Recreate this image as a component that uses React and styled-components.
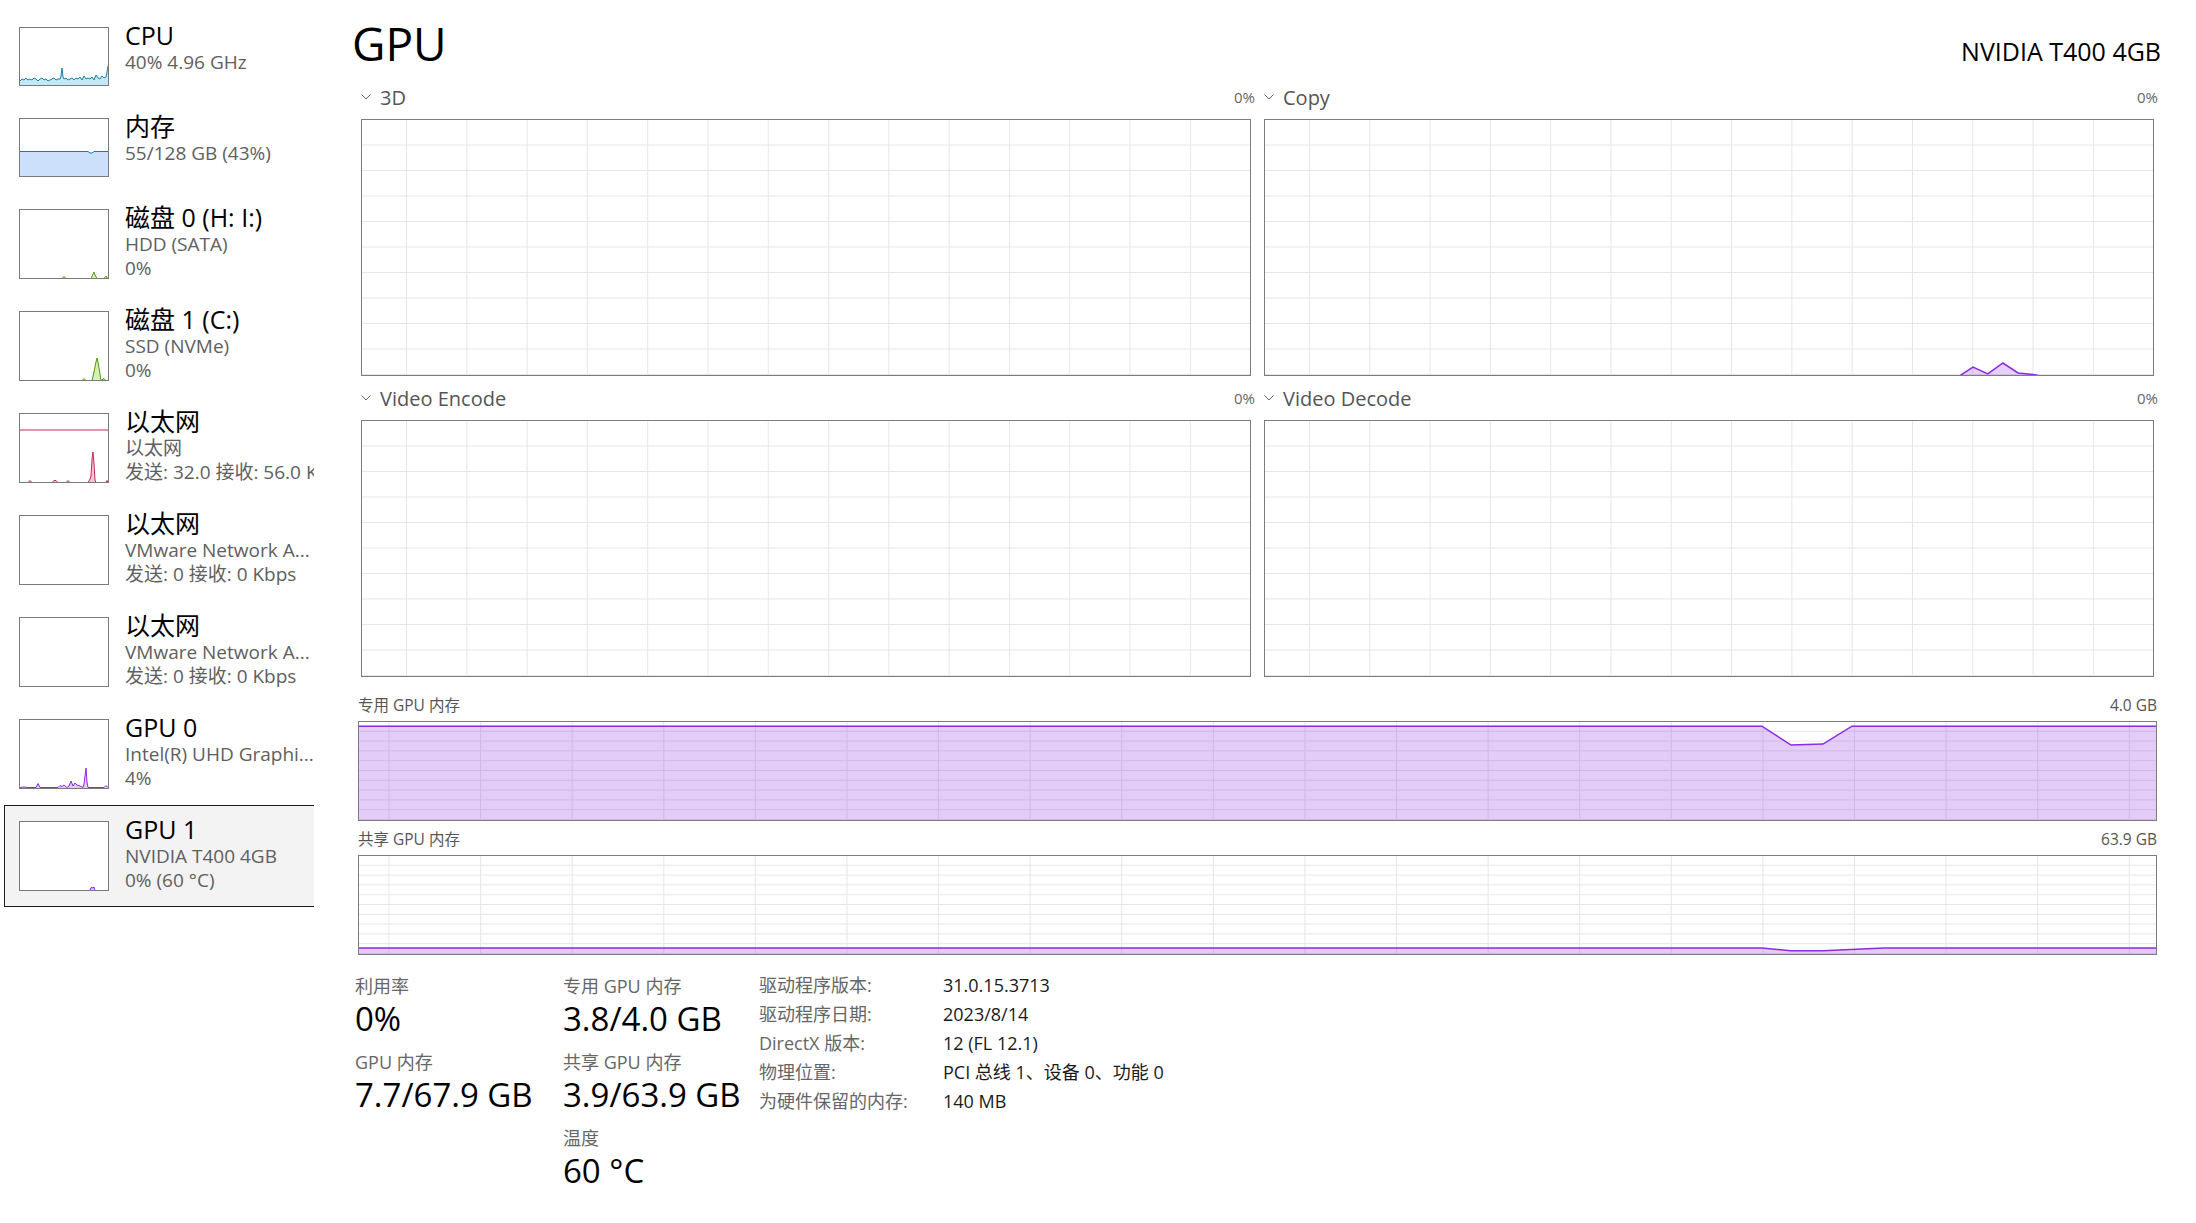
import React from "react";
import styled, { createGlobalStyle } from "styled-components";

const GlobalStyle = createGlobalStyle`
  html, body {
    margin: 0;
    padding: 0;
    background: #fff;
  }
  body {
    font-family: "Open Sans", "Noto Sans CJK SC", sans-serif;
    color: #000;
  }
  * {
    box-sizing: border-box;
  }
`;

const Page = styled.div`
  display: flex;
  width: 2196px;
  height: 1223px;
  overflow: hidden;
  background: #fff;
`;

/* ---------- sidebar ---------- */

const Sidebar = styled.div`
  width: 314px;
  flex: none;
  padding-top: 11px;
  overflow: hidden;
  display: flex;
  flex-direction: column;
`;

const Row = styled.div`
  display: flex;
  gap: 16px;
  width: 312px;
  height: ${(p) => p.$h + 32}px;
  margin-left: 4px;
  padding: 15px 0 15px 14px;
  border: 1px solid ${(p) => (p.$selected ? "#1c1c1c" : "transparent")};
  background: ${(p) => (p.$selected ? "#f3f3f3" : "transparent")};
  flex: none;
`;

const Thumb = styled.div`
  width: 90px;
  height: ${(p) => p.$h}px;
  flex: none;
  border: 1px solid #7a7a7a;
  background: #fff;

  svg {
    display: block;
    width: 100%;
    height: 100%;
    overflow: hidden;
  }
`;

const RowText = styled.div`
  margin-top: -7.5px;
  white-space: nowrap;
`;

const RowTitle = styled.div`
  font-size: 25px;
  line-height: 30px;
  color: #000;
`;

const RowSub = styled.div`
  font-size: 19px;
  line-height: 24px;
  color: #606060;
`;

/* ---------- main ---------- */

const Main = styled.div`
  flex: 1;
  min-width: 0;
  padding: 0 38px 0 40px;
  display: flex;
  flex-direction: column;
`;

const Header = styled.div`
  display: flex;
  justify-content: space-between;
  align-items: baseline;
  padding: 15px 0 4px;
`;

const Title = styled.h1`
  margin: 0 0 0 -2px;
  font-size: 46px;
  font-weight: 400;
  line-height: 56px;
`;

const Model = styled.div`
  margin-right: -3px;
  font-size: 25px;
  line-height: 30px;
`;

const EngineGrid = styled.div`
  display: grid;
  grid-template-columns: 1fr 1fr;
  column-gap: 5px;
  margin-left: 3px;
`;

const EngineHead = styled.div`
  height: 44px;
  display: flex;
  align-items: center;
  padding-left: 4px;
  color: #555;
`;

const EngineName = styled.span`
  font-size: 20px;
  margin-left: 9px;
`;

const EngineMax = styled.span`
  margin-left: auto;
  font-size: 15px;
  color: #666;
`;

const Chart = styled.div`
  position: relative;
  height: ${(p) => p.$h}px;
  margin: ${(p) => p.$m || "0 4px"};
  border: 1px solid #7c7c7c;
  background-color: #fff;
  background-image: linear-gradient(to right, #e6e6e6 1px, transparent 1px),
    linear-gradient(to bottom, #e6e6e6 1px, transparent 1px);
  background-size: ${(p) => p.$cw}px 100%, 100% 10%;
  background-position: ${(p) => p.$ox}px 0, 0 -1px;

  svg {
    position: absolute;
    inset: 0;
    width: 100%;
    height: 100%;
    display: block;
    overflow: hidden;
  }
`;

const MemBlock = styled.div`
  margin: 0 1px 0 4px;
  padding-top: ${(p) => p.$top}px;
`;

const MemHead = styled.div`
  display: flex;
  justify-content: space-between;
  font-size: 15.5px;
  line-height: 22px;
  color: #555;
  padding-bottom: 5px;
`;

const Stats = styled.div`
  display: flex;
  margin: 20px 0 0 1px;
`;

const StatCol = styled.div`
  width: ${(p) => p.$w}px;
  flex: none;
  display: flex;
  flex-direction: column;
  gap: 12px;
`;

const StatLabel = styled.div`
  font-size: 18px;
  line-height: 22px;
  color: #666;
`;

const StatValue = styled.div`
  padding-top: 2px;
  font-size: 33px;
  line-height: 40px;
  color: #000;
`;

const Details = styled.div`
  display: grid;
  grid-template-columns: 184px auto;
  margin-top: -4px;
  font-size: 18px;
  line-height: 29px;
  align-content: start;
`;

const DetailKey = styled.div`
  color: #666;
`;

const DetailVal = styled.div`
  color: #1a1a1a;
`;

/* ---------- drawings ---------- */

const Chevron = () => (
  <svg width="10" height="6" viewBox="0 0 10 6">
    <path d="M0.5 0.5 L5 5 L9.5 0.5" fill="none" stroke="#666" strokeWidth="1" />
  </svg>
);

const COLORS = {
  cpu: ["#1b7fa6", "#c3e8f6"],
  mem: ["#1e6ee8", "#cde0fb"],
  disk: ["#4d9a10", "#d6efbc"],
  net: ["#c4265e", "#f3c8d6"],
  gpu: ["#8a2be2", "#dfcaf9"],
};

// Z marks the zero level, a touch below the visible area so flat stretches hide
function Spark({ h, pts, kind, marker }) {
  const [stroke, fill] = COLORS[kind];
  const inner = h - 2;
  const z = inner + 0.6;
  const line = pts.replace(/Z/g, z);
  return (
    <svg viewBox={`0 0 88 ${inner}`} preserveAspectRatio="none">
      {marker != null && (
        <line x1="0" y1={marker} x2="88" y2={marker} stroke={stroke} strokeWidth="1" />
      )}
      <polygon points={`0,${z} ${line} 88,${z}`} fill={fill} />
      <polyline points={line} fill="none" stroke={stroke} strokeWidth="1" />
    </svg>
  );
}

function ChartFill({ pts, fill = "rgba(139, 43, 226, 0.24)" }) {
  return (
    <svg viewBox="0 0 100 100" preserveAspectRatio="none">
      <polygon points={`0,101 ${pts} 100,101`} fill={fill} />
      <polyline
        points={pts}
        fill="none"
        stroke="#8a2be2"
        strokeWidth="1.5"
        vectorEffect="non-scaling-stroke"
      />
    </svg>
  );
}

/* ---------- data ---------- */

const devices = [
  {
    title: "CPU",
    lines: ["40% 4.96 GHz"],
    h: 59,
    kind: "cpu",
    pts: "0,53 2,51 4,52 6,50 8,52 10,51 12,52 14,50 16,51 18,53 20,51 22,50 24,52 26,51 28,53 30,52 32,51 34,50 36,52 38,51 40,51 41,48 42,40 43,49 44,51 46,50 48,52 50,51 52,50 54,52 56,50 58,51 60,49 62,52 64,48 66,51 68,50 70,51 72,49 74,52 76,47 78,50 80,51 82,48 84,50 86,49 87,44 88,38",
  },
  {
    title: "内存",
    lines: ["55/128 GB (43%)"],
    h: 59,
    kind: "mem",
    pts: "0,32.5 68,32.5 70,34 72,34 74,32.5 88,32.5",
  },
  {
    title: "磁盘 0 (H: I:)",
    lines: ["HDD (SATA)", "0%"],
    h: 70,
    kind: "disk",
    pts: "0,Z 42,Z 44,66.5 46,Z 71,Z 73,64 74,62 75,65 77,Z 84,Z 86,66 88,Z",
  },
  {
    title: "磁盘 1 (C:)",
    lines: ["SSD (NVMe)", "0%"],
    h: 70,
    kind: "disk",
    pts: "0,Z 62,Z 64,66.5 66,Z 72,Z 74,60 76,50 77,46 78,50 80,62 81,Z 84,66.5 86,Z 88,Z",
  },
  {
    title: "以太网",
    lines: ["以太网", "发送: 32.0 接收: 56.0 Kbps"],
    h: 70,
    kind: "net",
    marker: 16,
    pts: "0,Z 8,Z 10,66.5 12,Z 32,Z 34,66.5 36,66.5 38,Z 46,Z 48,66.5 50,Z 68,Z 70,65 71,62 72,45 73,38 74,50 75,66 76,Z 86,Z 87,66.5 88,Z",
  },
  {
    title: "以太网",
    lines: ["VMware Network A...", "发送: 0 接收: 0 Kbps"],
    h: 70,
  },
  {
    title: "以太网",
    lines: ["VMware Network A...", "发送: 0 接收: 0 Kbps"],
    h: 70,
  },
  {
    title: "GPU 0",
    lines: ["Intel(R) UHD Graphi...", "4%"],
    h: 70,
    kind: "gpu",
    pts: "0,67.5 4,67 8,67.5 16,67.5 18,63.5 20,67.5 38,67.5 40,65.5 42,66.5 44,65 47,67.5 49,66 51,61 53,66 55,63 57,65 60,66 63,67.5 64,64 66,48 67,62 68,67.5 84,67.5 86,65.5 88,67.5",
  },
  {
    title: "GPU 1",
    lines: ["NVIDIA T400 4GB", "0% (60 °C)"],
    h: 70,
    kind: "gpu",
    selected: true,
    pts: "0,Z 70,Z 71,65.5 73,66 74,65 75,Z 88,Z",
  },
];

const engines = [
  { name: "3D", pts: null },
  {
    name: "Copy",
    pts: "78.15,100.5 79.73,96.9 81.4,99.6 83.1,95.3 84.8,99.2 86.5,99.8 87.5,100.5",
  },
  { name: "Video Encode", pts: null },
  { name: "Video Decode", pts: null },
];

const details = [
  ["驱动程序版本:", "31.0.15.3713"],
  ["驱动程序日期:", "2023/8/14"],
  ["DirectX 版本:", "12 (FL 12.1)"],
  ["物理位置:", "PCI 总线 1、设备 0、功能 0"],
  ["为硬件保留的内存:", "140 MB"],
];

export default function App() {
  return (
    <>
      <GlobalStyle />
      <Page>
        <Sidebar>
          {devices.map((d, i) => (
            <Row key={i} $h={d.h} $selected={d.selected}>
              <Thumb $h={d.h}>
                {d.kind && <Spark h={d.h} pts={d.pts} kind={d.kind} marker={d.marker} />}
              </Thumb>
              <RowText>
                <RowTitle>{d.title}</RowTitle>
                {d.lines.map((l, j) => (
                  <RowSub key={j}>{l}</RowSub>
                ))}
              </RowText>
            </Row>
          ))}
        </Sidebar>

        <Main>
          <Header>
            <Title>GPU</Title>
            <Model>NVIDIA T400 4GB</Model>
          </Header>

          <EngineGrid>
            {engines.map((e) => (
              <div key={e.name}>
                <EngineHead>
                  <Chevron />
                  <EngineName>{e.name}</EngineName>
                  <EngineMax>0%</EngineMax>
                </EngineHead>
                <Chart $h={257} $cw={60.3} $ox={44}>
                  {e.pts && (
                    <ChartFill pts={e.pts} fill="rgba(139, 43, 226, 0.22)" />
                  )}
                </Chart>
              </div>
            ))}
          </EngineGrid>

          <MemBlock $top={17}>
            <MemHead>
              <span>专用 GPU 内存</span>
              <span>4.0 GB</span>
            </MemHead>
            <Chart $h={100} $cw={91.6} $ox={29.5} $m="0">
              <ChartFill pts="0,4.3 78.07,4.3 79.69,23.5 81.47,22.5 83.08,4.3 100,4.3" />
            </Chart>
          </MemBlock>

          <MemBlock $top={7}>
            <MemHead>
              <span>共享 GPU 内存</span>
              <span>63.9 GB</span>
            </MemHead>
            <Chart $h={100} $cw={91.6} $ox={29.5} $m="0">
              <ChartFill pts="0,93.8 78.07,93.8 79.69,96.8 81.47,96.8 84.86,93.8 100,93.8" />
            </Chart>
          </MemBlock>

          <Stats>
            <StatCol $w={208}>
              <div>
                <StatLabel>利用率</StatLabel>
                <StatValue>0%</StatValue>
              </div>
              <div>
                <StatLabel>GPU 内存</StatLabel>
                <StatValue>7.7/67.9 GB</StatValue>
              </div>
            </StatCol>
            <StatCol $w={196}>
              <div>
                <StatLabel>专用 GPU 内存</StatLabel>
                <StatValue>3.8/4.0 GB</StatValue>
              </div>
              <div>
                <StatLabel>共享 GPU 内存</StatLabel>
                <StatValue>3.9/63.9 GB</StatValue>
              </div>
              <div>
                <StatLabel>温度</StatLabel>
                <StatValue>60 °C</StatValue>
              </div>
            </StatCol>
            <Details>
              {details.map(([k, v]) => (
                <React.Fragment key={k}>
                  <DetailKey>{k}</DetailKey>
                  <DetailVal>{v}</DetailVal>
                </React.Fragment>
              ))}
            </Details>
          </Stats>
        </Main>
      </Page>
    </>
  );
}
